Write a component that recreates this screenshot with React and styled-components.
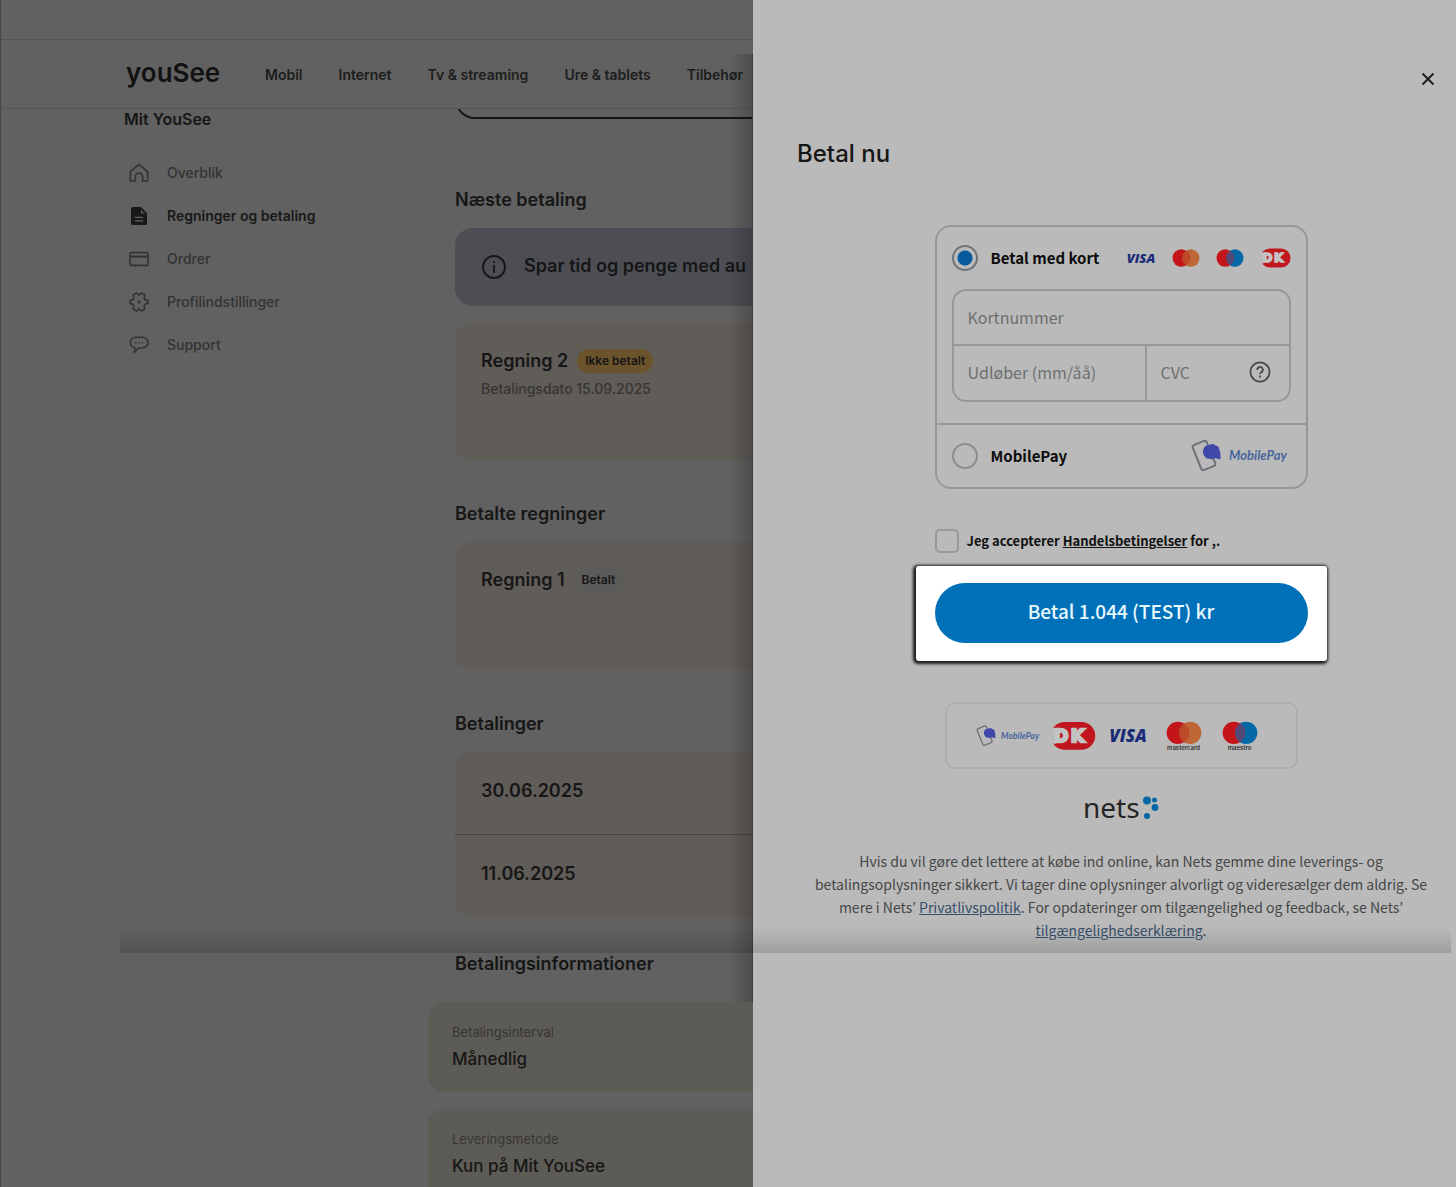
import React, { useState } from "react";
import styled, { createGlobalStyle, css } from "styled-components";

const GlobalStyle = createGlobalStyle`
  * {
    box-sizing: border-box;
  }
  body {
    margin: 0;
    background: #616161;
    color: #161616;
    font-family: Inter, "Liberation Sans", sans-serif;
  }
  h1, h2, h3, p, ul {
    margin: 0;
    padding: 0;
  }
  button, input {
    font-family: inherit;
  }
`;

const payFont = `"Noto Sans CJK KR", "Noto Sans", sans-serif`;

const Page = styled.div`
  position: relative;
  display: grid;
  grid-template-columns: minmax(0, 1fr) 703px;
  min-height: 100vh;
`;

const Site = styled.div`
  position: relative;
  display: flex;
  flex-direction: column;
  overflow: hidden;
  background: #616161;
  border-left: 1px solid #484848;
  border-bottom: 1px solid #2b2b2b;
`;

const TopBar = styled.div`
  height: 40px;
  border-bottom: 1px solid #555;
`;

const Header = styled.header`
  display: flex;
  align-items: center;
  height: 69px;
  padding-left: 125px;
  border-bottom: 1px solid #565656;
`;

const Logo = styled.a`
  width: 139px;
  flex: none;
  padding-bottom: 2px;
  font-size: 26px;
  line-height: 32px;
  font-weight: 600;
  color: #121212;
  text-decoration: none;
`;

const Nav = styled.nav`
  display: flex;
  gap: 36px;
  padding-top: 2px;

  a {
    color: #1d1d1d;
    font-size: 14px;
    line-height: 20px;
    font-weight: 600;
    text-decoration: none;
    white-space: nowrap;
  }
`;

const Body = styled.div`
  flex: 1;
  display: grid;
  grid-template-columns: 308px minmax(0, 1fr);
  padding-left: 119px;
`;

const Sidebar = styled.aside`
  padding-left: 4px;

  h2 {
    margin-bottom: 22px;
    font-size: 16px;
    line-height: 20px;
    font-weight: 600;
  }

  ul {
    list-style: none;
  }
`;

const SideLink = styled.a`
  display: flex;
  align-items: center;
  gap: 18px;
  height: 43px;
  padding-left: 5px;
  font-size: 14px;
  line-height: 20px;
  font-weight: ${(p) => (p.$active ? 600 : 500)};
  color: ${(p) => (p.$active ? "#181818" : "#333")};
  text-decoration: none;
`;

const Content = styled.main`
  display: flex;
  flex-direction: column;
`;

const Billing = styled.div`
  padding-left: 27px;
`;

const BoxClip = styled.div`
  display: flex;
  align-items: flex-end;
  height: 10px;
  margin-bottom: 69px;
  overflow: hidden;
`;

const OutlinedBox = styled.div`
  flex: 1;
  height: 40px;
  border: 2px solid #161616;
  border-right: 0;
  border-radius: 20px 0 0 20px;
`;

const SectionTitle = styled.h2`
  margin-bottom: 16px;
  font-size: 18px;
  line-height: 24px;
  font-weight: 600;
  white-space: nowrap;
`;

const Banner = styled.div`
  display: flex;
  align-items: center;
  gap: 17px;
  height: 78px;
  margin-bottom: 17px;
  padding: 0 0 2px 26px;
  border-radius: 18px 0 0 18px;
  background: #4d4e54;
  font-size: 18px;
  line-height: 24px;
  font-weight: 600;
  white-space: nowrap;

  svg {
    flex: none;
  }
`;

const BillCard = styled.article`
  height: ${(p) => p.$height}px;
  margin-bottom: 42px;
  padding: 26px;
  border-radius: 16px 0 0 16px;
  background: #605c58;

  h3 {
    display: flex;
    align-items: center;
    gap: 9px;
    font-size: 18px;
    line-height: 24px;
    font-weight: 600;
  }

  p {
    margin-top: 6px;
    font-size: 14px;
    line-height: 20px;
    font-weight: 500;
    color: #363432;
  }
`;

const Badge = styled.span`
  padding: 0 8px;
  border-radius: 12px;
  background: ${(p) => (p.$unpaid ? "#6b532c" : "#5b5b59")};
  font-size: 12px;
  line-height: 24px;
  font-weight: 600;
`;

const Payments = styled.ul`
  margin-bottom: 35px;
  border-radius: 16px 0 0 16px;
  background: #605c58;
  list-style: none;

  li {
    padding: 27px 26px 31px;
    font-size: 18px;
    line-height: 24px;
    font-weight: 600;
  }

  li + li {
    border-top: 1px solid #474645;
  }
`;

const InfoCard = styled.section`
  padding: 20px 24px;
  border-radius: 16px 0 0 16px;
  background: #5d5b55;

  p {
    font-size: 13px;
    line-height: 20px;
    color: #373634;
  }

  h3 {
    margin-top: 4px;
    font-size: 17px;
    line-height: 26px;
    font-weight: 500;
  }

  & + & {
    flex: 1;
    margin-top: 17px;
    border-radius: 16px 0 0 0;
  }
`;

const InfoTitle = styled(SectionTitle)`
  margin: 0 0 26px 27px;
`;

const DrawerShade = styled.div`
  position: absolute;
  top: 54px;
  right: 0;
  width: 24px;
  height: 948px;
  border-right: 1px solid #3c3c40;
  background: linear-gradient(to right, transparent, rgba(0, 0, 0, 0.2));
`;

const BottomShade = styled.div`
  position: absolute;
  top: 927px;
  left: 120px;
  right: 5px;
  height: 26px;
  background: linear-gradient(to bottom, transparent, rgba(0, 0, 0, 0.15));
  pointer-events: none;
`;

const Drawer = styled.aside`
  padding: 69px 11px 0 44px;
  background: #bababa;
`;

const CloseButton = styled.button`
  display: block;
  margin: 0 7px 0 auto;
  padding: 0;
  border: 0;
  background: none;
  color: #1c1c1c;
  line-height: 0;
`;

const DrawerTitle = styled.h1`
  margin: 49px 0 55px;
  font-size: 24px;
  line-height: 32px;
  font-weight: 500;
`;

const PayForm = styled.form`
  display: flex;
  flex-direction: column;
  align-items: center;
  font-family: ${payFont};
`;

const Methods = styled.div`
  width: 373px;
  border: 2px solid #969998;
  border-radius: 16px;
`;

const Method = styled.div`
  display: flex;
  align-items: center;
  height: 62px;
  padding: 0 15px;

  label {
    flex: 1;
    margin-left: 13px;
    font-size: 15px;
    line-height: 24px;
    font-weight: 700;
    color: #0c0c0c;
    white-space: nowrap;
  }
`;

const Radio = styled.input`
  appearance: none;
  flex: none;
  width: 26px;
  height: 26px;
  margin: 0;
  border: 2px solid #8b8e8d;
  border-radius: 50%;

  &:checked {
    border-color: #6e7478;
    background: radial-gradient(circle, #075a9c 7px, transparent 8px);
  }
`;

const CardLogos = styled.div`
  display: flex;
  align-items: center;
  gap: 16px;
`;

const Fields = styled.div`
  display: grid;
  grid-template-columns: minmax(0, 193px) minmax(0, 1fr);
  margin: 0 15px 21px;
  border: 2px solid #969998;
  border-radius: 14px;
`;

const fieldLine = css`
  border: 0 solid #969998;
`;

const Field = styled.div`
  ${fieldLine}
  display: flex;
  align-items: center;
  height: 54px;
  padding-left: 14px;
  ${(p) => p.$wide && "grid-column: 1 / -1; height: 55px; border-bottom-width: 2px;"}
  ${(p) => p.$divided && "border-right-width: 2px;"}

  input {
    flex: 1;
    min-width: 0;
    padding: 0 0 2px;
    border: 0;
    outline: 0;
    background: none;
    font-size: 16px;
    line-height: 24px;
  }

  input::placeholder {
    color: #6d706f;
    opacity: 1;
  }
`;

const HelpButton = styled.button`
  margin-right: 17px;
  padding: 0 0 2px;
  border: 0;
  background: none;
  line-height: 0;
`;

const MobilePayRow = styled.div`
  border-top: 2px solid #969998;
`;

const Terms = styled.div`
  display: flex;
  align-items: center;
  gap: 8px;
  width: 373px;
  margin: 40px 0 13px;
  font-size: 13px;
  line-height: 24px;
  font-weight: 700;
  color: #111;

  input {
    appearance: none;
    width: 24px;
    height: 24px;
    margin: 0;
    border: 2px solid #989a99;
    border-radius: 5px;
  }

  input:checked {
    background: #075a9c;
  }

  a {
    color: inherit;
  }
`;

const Highlight = styled.div`
  padding: 17px 19px 18px;
  border-radius: 3px;
  background: #fff;
  box-shadow: -1px 1px 3px 2px #1c1c1c;
`;

const PayButton = styled.button`
  display: block;
  width: 373px;
  height: 60px;
  padding: 0 0 4px;
  border: 0;
  border-radius: 30px;
  background: #0071b9;
  color: #e8f8ff;
  font-size: 19px;
  line-height: 28px;
  font-weight: 500;
`;

const Accepted = styled.div`
  display: flex;
  align-items: center;
  gap: 8px;
  width: 353px;
  height: 67px;
  margin: 41px 0 19px;
  padding-left: 29px;
  border: 2px solid #adafae;
  border-radius: 10px;
`;

const Legal = styled.p`
  max-width: 624px;
  margin-top: 20px;
  font-size: 14px;
  line-height: 23px;
  text-align: center;
  color: #454746;

  a {
    color: #37506b;
  }
`;

const HomeIcon = () => (
  <svg width="20" height="20" viewBox="0 0 20 20" fill="none" stroke="currentColor" strokeWidth="1.6" strokeLinejoin="round">
    <path d="M1.4 18V8.6L10 1.4l8.6 7.2V18h-5v-4.4a3.6 3.6 0 0 0-7.2 0V18z" />
  </svg>
);

const BillIcon = () => (
  <svg width="20" height="20" viewBox="0 0 20 20">
    <path d="M3.5 1H12l6 6v10.5q0 1.5-1.5 1.5h-13Q2 19 2 17.5v-15Q2 1 3.5 1z" fill="#181818" />
    <path d="M12.6 4v3h3M6 11.4h8M6 14.8h8" fill="none" stroke="#616161" strokeWidth="1.2" />
  </svg>
);

const CardIcon = () => (
  <svg width="20" height="20" viewBox="0 0 20 20" fill="none" stroke="currentColor" strokeWidth="1.6">
    <rect x="1" y="3.6" width="18" height="12.8" rx="1.4" />
    <path d="M1 7.6h18" strokeWidth="2" />
  </svg>
);

const GearIcon = () => (
  <svg width="20" height="20" viewBox="0 0 20 20" fill="none" stroke="currentColor" strokeWidth="1.6" strokeLinejoin="round">
    <path d="M10 3.1 12.2 1l3.6 2-.7 3.1 1.1 1.8L19 8.6v2.8l-2.8.7-1.1 1.8.7 3.1-3.6 2-2.2-2.1L7.8 19l-3.6-2 .7-3.1-1.1-1.8-2.8-.7V8.6l2.8-.7 1.1-1.8L4.2 3l3.6-2z" />
    <circle cx="10" cy="10" r="1.4" fill="currentColor" stroke="none" />
  </svg>
);

const ChatIcon = () => (
  <svg width="20" height="20" viewBox="0 0 20 20" fill="none" stroke="currentColor" strokeWidth="1.6" strokeLinejoin="round">
    <path d="M7 2.2h6a6 5.3 0 0 1 0 10.8H9.5l-4.3 4.6.6-4.7A5.5 5.4 0 0 1 7 2.2z" />
    <path d="M6 7.8h1.4M9.3 7.8h1.4M12.6 7.8H14" />
  </svg>
);

const InfoIcon = () => (
  <svg width="26" height="26" viewBox="0 0 26 26" fill="none" stroke="#181818" strokeWidth="2">
    <circle cx="13" cy="14" r="11" />
    <path d="M13 12v8M13 8v2" strokeWidth="1.8" />
  </svg>
);

const CloseIcon = () => (
  <svg width="20" height="20" viewBox="0 0 20 20" stroke="currentColor" strokeWidth="1.8">
    <path d="m4.5 4.5 11 11M15.5 4.5l-11 11" />
  </svg>
);

const HelpIcon = () => (
  <svg width="24" height="24" viewBox="0 0 24 24" fill="none" stroke="#44484a" strokeWidth="1.8">
    <circle cx="12" cy="12" r="9.6" />
    <path d="M9.2 9.9a2.8 2.8 0 1 1 4.2 2.3c-.9.6-1.4.9-1.4 1.9" />
    <path d="M12 15.6v2" />
  </svg>
);

const VisaLogo = ({ width = 30, size = 13 }) => (
  <svg width={width} height="30" role="img" aria-label="VISA">
    <text
      x={width / 2}
      y={15 + size * 0.36}
      textAnchor="middle"
      fontFamily="Open Sans, sans-serif"
      fontSize={size}
      fontWeight="800"
      fontStyle="italic"
      fill="#1a2c78"
    >
      VISA
    </text>
  </svg>
);

const CirclesLogo = ({ width = 28, right, overlap, name }) => (
  <svg width={width} height={(width * 20) / 28} viewBox="0 0 28 20" role="img" aria-label={name}>
    <circle cx="18.8" cy="10" r="8.7" fill={right} />
    <circle cx="9.2" cy="10" r="8.7" fill="#c4161a" />
    <path d="M14 2.7a8.7 8.7 0 0 1 0 14.6 8.7 8.7 0 0 1 0-14.6z" fill={overlap} />
  </svg>
);

const Mastercard = (props) => (
  <CirclesLogo name="Mastercard" right="#bf6636" overlap="#bd4a28" {...props} />
);

const Maestro = (props) => (
  <CirclesLogo name="Maestro" right="#0568a6" overlap="#544a78" {...props} />
);

const DankortLogo = ({ width = 31 }) => (
  <svg width={width} height={(width * 20) / 31} viewBox="0 0 31 20" role="img" aria-label="Dankort">
    <rect x="0.5" y="0.6" width="30" height="18.8" rx="9.4" fill="#c1161f" />
    <path d="M0 4.700h4v10.600H0z" fill="#bababa" />
    <g
      fontFamily="DejaVu Sans, sans-serif"
      fontSize="12"
      fontWeight="700"
      fill="#c4c2c2"
      stroke="#c4c2c2"
      strokeWidth="1.6"
    >
      <text x="2.500" y="14.400">D</text>
      <text x="14" y="14.400">K</text>
    </g>
  </svg>
);

const MobilePayLogo = ({ width = 100 }) => (
  <svg width={width} height={(width * 36) / 100} viewBox="0 0 100 36" role="img" aria-label="MobilePay">
    <rect x="5.5" y="4" width="15" height="27" rx="2.5" transform="rotate(-22 13 17.5)" fill="none" stroke="#6c7177" strokeWidth="2" />
    <path d="M13 9.500q2.500-3 6-2.800 3-1.500 5.500.8 3.700.6 3.700 4 2 4 1 10l-5.300-1.400q-2.500 2-5.500.4-3 .8-4.500-2-3.400-3.500-.9-9z" fill="#3f48a8" />
    <text x="38" y="22" fontFamily="Lato, sans-serif" fontSize="13" fontWeight="700" fontStyle="italic" fill="#47659c">
      MobilePay
    </text>
  </svg>
);

const Captioned = styled.span`
  display: flex;
  flex-direction: column;
  align-items: center;
  width: 48px;
  font-family: Inter, sans-serif;
  font-size: 6px;
  line-height: 6px;
  font-weight: 600;
  color: #2f2f2f;
`;

const NetsLogo = () => (
  <svg width="78" height="42" viewBox="0 0 78 42" role="img" aria-label="nets">
    <text x="1" y="30" fontFamily="Noto Sans, sans-serif" fontSize="28" fill="#252525">
      nets
    </text>
    <circle cx="65" cy="12.5" r="4" fill="#0568a6" />
    <circle cx="72.5" cy="12" r="2.5" fill="#0568a6" />
    <circle cx="73" cy="19.5" r="3.4" fill="#0568a6" />
    <circle cx="65" cy="28" r="3" fill="#0568a6" />
  </svg>
);

const navItems = ["Mobil", "Internet", "Tv & streaming", "Ure & tablets", "Tilbehør"];

const sideItems = [
  { label: "Overblik", Icon: HomeIcon },
  { label: "Regninger og betaling", Icon: BillIcon, active: true },
  { label: "Ordrer", Icon: CardIcon },
  { label: "Profilindstillinger", Icon: GearIcon },
  { label: "Support", Icon: ChatIcon },
];

const payments = ["30.06.2025", "11.06.2025"];

export default function App() {
  const [method, setMethod] = useState("card");

  return (
    <>
      <GlobalStyle />
      <Page>
        <Site>
          <TopBar />
          <Header>
            <Logo href="#">youSee</Logo>
            <Nav>
              {navItems.map((item) => (
                <a href="#" key={item}>
                  {item}
                </a>
              ))}
            </Nav>
          </Header>
          <Body>
            <Sidebar>
              <h2>Mit YouSee</h2>
              <ul>
                {sideItems.map(({ label, Icon, active }) => (
                  <li key={label}>
                    <SideLink href="#" $active={active}>
                      <Icon />
                      {label}
                    </SideLink>
                  </li>
                ))}
              </ul>
            </Sidebar>
            <Content>
              <Billing>
                <BoxClip>
                  <OutlinedBox />
                </BoxClip>
                <SectionTitle>Næste betaling</SectionTitle>
                <Banner>
                  <InfoIcon />
                  Spar tid og penge med au
                </Banner>
                <BillCard $height={137}>
                  <h3>
                    Regning 2 <Badge $unpaid>Ikke betalt</Badge>
                  </h3>
                  <p>Betalingsdato 15.09.2025</p>
                </BillCard>
                <SectionTitle>Betalte regninger</SectionTitle>
                <BillCard $height={128}>
                  <h3>
                    Regning 1 <Badge>Betalt</Badge>
                  </h3>
                </BillCard>
                <SectionTitle>Betalinger</SectionTitle>
                <Payments>
                  {payments.map((date) => (
                    <li key={date}>{date}</li>
                  ))}
                </Payments>
              </Billing>
              <InfoTitle>Betalingsinformationer</InfoTitle>
              <InfoCard>
                <p>Betalingsinterval</p>
                <h3>Månedlig</h3>
              </InfoCard>
              <InfoCard>
                <p>Leveringsmetode</p>
                <h3>Kun på Mit YouSee</h3>
              </InfoCard>
            </Content>
          </Body>
          <DrawerShade />
        </Site>

        <Drawer>
          <CloseButton type="button" aria-label="Luk">
            <CloseIcon />
          </CloseButton>
          <DrawerTitle>Betal nu</DrawerTitle>
          <PayForm onSubmit={(e) => e.preventDefault()}>
            <Methods>
              <Method>
                <Radio
                  type="radio"
                  id="card"
                  name="method"
                  checked={method === "card"}
                  onChange={() => setMethod("card")}
                />
                <label htmlFor="card">Betal med kort</label>
                <CardLogos>
                  <VisaLogo />
                  <Mastercard />
                  <Maestro />
                  <DankortLogo />
                </CardLogos>
              </Method>
              <Fields>
                <Field $wide>
                  <input aria-label="Kortnummer" placeholder="Kortnummer" />
                </Field>
                <Field $divided>
                  <input aria-label="Udløber (mm/åå)" placeholder="Udløber (mm/åå)" />
                </Field>
                <Field>
                  <input aria-label="CVC" placeholder="CVC" />
                  <HelpButton type="button" aria-label="Hjælp til CVC">
                    <HelpIcon />
                  </HelpButton>
                </Field>
              </Fields>
              <MobilePayRow>
                <Method>
                  <Radio
                    type="radio"
                    id="mobilepay"
                    name="method"
                    checked={method === "mobilepay"}
                    onChange={() => setMethod("mobilepay")}
                  />
                  <label htmlFor="mobilepay">MobilePay</label>
                  <MobilePayLogo />
                </Method>
              </MobilePayRow>
            </Methods>
            <Terms>
              <input type="checkbox" id="terms" />
              <label htmlFor="terms">
                Jeg accepterer <a href="#">Handelsbetingelser</a> for ,.
              </label>
            </Terms>
            <Highlight>
              <PayButton type="submit">Betal 1.044 (TEST) kr</PayButton>
            </Highlight>
            <Accepted>
              <MobilePayLogo width={66} />
              <DankortLogo width={46} />
              <VisaLogo width={48} size={17} />
              <Captioned>
                <Mastercard width={36} />
                mastercard
              </Captioned>
              <Captioned>
                <Maestro width={36} />
                maestro
              </Captioned>
            </Accepted>
            <NetsLogo />
            <Legal>
              Hvis du vil gøre det lettere at købe ind online, kan Nets gemme dine leverings- og
              betalingsoplysninger sikkert. Vi tager dine oplysninger alvorligt og videresælger dem
              aldrig. Se mere i Nets’ <a href="#">Privatlivspolitik</a>. For opdateringer om
              tilgængelighed og feedback, se Nets’ <a href="#">tilgængelighedserklæring</a>.
            </Legal>
          </PayForm>
        </Drawer>
        <BottomShade />
      </Page>
    </>
  );
}
